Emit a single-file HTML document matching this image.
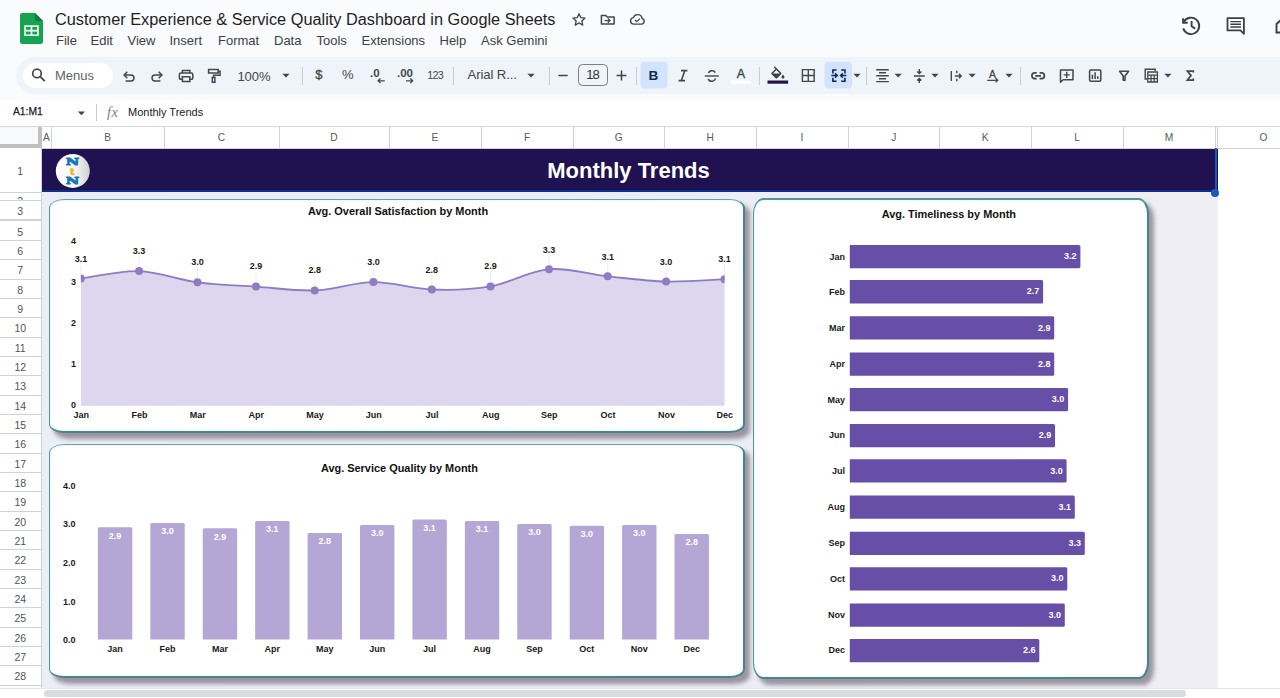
<!DOCTYPE html>
<html lang="en"><head><meta charset="utf-8"><title>Customer Experience &amp; Service Quality Dashboard</title>
<style>
*{box-sizing:border-box;margin:0;padding:0}
html,body{width:1280px;height:698px;overflow:hidden;background:#f9fbfd;font-family:"Liberation Sans",Arial,sans-serif;color:#1f1f1f}
.abs{position:absolute}
#root{position:relative;width:1280px;height:698px;overflow:hidden}
.title{left:55px;top:9.4px;font-size:15.6px;line-height:22px;color:#1f1f1f;white-space:nowrap;transform-origin:0 50%;transform:scaleX(1.046)}
.menu{top:31.5px;font-size:13px;line-height:18px;color:#3c4043;white-space:nowrap}
.tb{left:16px;top:57px;width:1290px;height:37px;border-radius:19px;background:#eff3fa}
.tbt{font-size:13.5px;color:#444746;line-height:18px;white-space:nowrap}
.sep{width:1px;height:18px;top:66.5px;background:#c9ccd1}
.fbar{left:0;top:99.6px;width:1280px;height:27px;background:#fff}
.colhdr{top:127px;height:21px;background:#fff;border-right:1px solid #cfd2d6;font-size:10.2px;color:#555a60;text-align:center;line-height:22px}
.rowhdr{left:0;width:42px;background:#fff;border-bottom:1px solid #cfd2d6;font-size:10.5px;color:#50545a;text-align:center;overflow:hidden;padding-right:1.5px}
.card{background:#fff;border:solid #4b8388;border-width:1.9px 2.5px 2.2px 1.9px;border-top-color:#6d9fa2;border-left-color:#5a9497;box-shadow:5px 5.5px 4px rgba(105,96,108,.62), inset 0 0 3px rgba(170,235,235,.6)}
.ct{font-weight:bold;font-size:10.6px;color:#111;text-align:center;white-space:nowrap;line-height:12px}
svg text{font-family:"Liberation Sans",Arial,sans-serif;font-weight:bold}
</style></head>
<body><div id="root">
<div class="abs" style="left:0;top:0;width:1280px;height:99px;background:#f9fbfd"></div>
<svg class="abs" style="left:19px;top:12px" width="25" height="33" viewBox="0 0 25 33">
<path d="M3.5 1 H16 L24 9 V29.5 a2.5 2.5 0 0 1 -2.5 2.5 H3.5 a2.5 2.5 0 0 1 -2.5 -2.5 V3.5 A2.5 2.5 0 0 1 3.5 1 Z" fill="#17a451"/>
<path d="M16 1 L24 9 H18 a2 2 0 0 1 -2 -2 Z" fill="#0c7d3b"/>
<rect x="5.2" y="13.2" width="14.6" height="10.8" fill="#e9f7ee"/>
<rect x="7" y="15" width="4.6" height="2.8" fill="#17a451"/><rect x="13.4" y="15" width="4.6" height="2.8" fill="#17a451"/>
<rect x="7" y="19.6" width="4.6" height="2.8" fill="#17a451"/><rect x="13.4" y="19.6" width="4.6" height="2.8" fill="#17a451"/>
</svg>
<div class="abs title">Customer Experience &amp; Service Quality Dashboard in Google Sheets</div>
<div class="abs menu" style="left:56px">File</div>
<div class="abs menu" style="left:90.5px">Edit</div>
<div class="abs menu" style="left:127.5px">View</div>
<div class="abs menu" style="left:169.5px">Insert</div>
<div class="abs menu" style="left:218px">Format</div>
<div class="abs menu" style="left:274px">Data</div>
<div class="abs menu" style="left:316.5px">Tools</div>
<div class="abs menu" style="left:361.5px">Extensions</div>
<div class="abs menu" style="left:439.5px">Help</div>
<div class="abs menu" style="left:481px">Ask Gemini</div>
<div class="abs tb"></div>
<div class="abs" style="left:23px;top:63px;width:90px;height:24.6px;border-radius:13px;background:#fff"></div>
<div class="abs tbt" style="left:55px;top:67px;font-size:13px;color:#5f6368">Menus</div>
<div class="abs tbt" style="left:237.4px;top:67.6px;font-size:13px">100%</div>
<div class="abs tbt" style="left:315.3px;top:66px;font-size:13px;-webkit-text-stroke:0.3px #444746">$</div>
<div class="abs tbt" style="left:342px;top:66px;font-size:13px">%</div>
<div class="abs tbt" style="left:370px;top:64px;font-size:11.5px;font-weight:bold">.0</div>
<div class="abs tbt" style="left:397px;top:64px;font-size:11.5px;font-weight:bold">.00</div>
<div class="abs tbt" style="left:427.2px;top:66.3px;font-size:10.8px;letter-spacing:-0.75px">123</div>
<div class="abs tbt" style="left:467.5px;top:66.3px;font-size:13.2px;letter-spacing:-0.12px">Arial R...</div>
<div class="abs" style="left:577.6px;top:64.2px;width:30.4px;height:21.6px;border:1px solid #7c7f82;border-radius:4.5px"></div>
<div class="abs tbt" style="left:577.6px;top:66.3px;width:30px;text-align:center;color:#303134;font-size:13px;letter-spacing:-0.8px">18</div>
<div class="abs sep" style="left:302px"></div>
<div class="abs sep" style="left:453px"></div>
<div class="abs sep" style="left:548.5px"></div>
<div class="abs sep" style="left:636px"></div>
<div class="abs sep" style="left:759px"></div>
<div class="abs sep" style="left:866px"></div>
<div class="abs sep" style="left:1020px"></div>
<div class="abs fbar"></div>
<div class="abs" style="left:13px;top:105px;font-size:10.3px;color:#202124;line-height:14px;-webkit-text-stroke:0.25px #202124">A1:M1</div>
<div class="abs" style="left:96px;top:104px;width:1px;height:17px;background:#c7c9cc"></div>
<div class="abs" style="left:107px;top:103.6px;font-size:14.5px;color:#7b8085;line-height:16px;font-style:italic;letter-spacing:0.4px;font-family:'Liberation Serif',serif">fx</div>
<div class="abs" style="left:128px;top:105px;font-size:11px;color:#202124;line-height:14px">Monthly Trends</div>
<svg class="abs" style="left:0;top:0" width="1280" height="130" viewBox="0 0 1280 130" fill="none" stroke="#444746" stroke-width="1.6" stroke-linecap="butt" stroke-linejoin="miter">
<path d="M579 13.7 l1.8 4 4.3 .4 -3.3 2.9 1 4.2 -3.8 -2.3 -3.8 2.3 1 -4.2 -3.3 -2.9 4.3 -.4 Z" stroke-width="1.3" stroke-linejoin="round"/>
<path d="M601.4 15.4 h4.4 l1.5 1.6 h6.8 v7 h-12.7 Z" stroke-width="1.5" stroke-linejoin="round"/><path d="M604.6 20.6 h5.2 M607.8 18.5 l2.2 2.1 -2.2 2.1" stroke-width="1.3"/>
<path d="M633.2 24.1 h8.4 a2.8 2.8 0 0 0 .5 -5.5 a4.5 4.5 0 0 0 -8.7 -1 a3.3 3.3 0 0 0 -.2 6.5 Z" stroke-width="1.4"/><path d="M635 20 l1.7 1.7 3.1 -3.1" stroke-width="1.3"/>
<g stroke-width="1.9" stroke="#3c4043" transform="translate(0.6,0.4)"><path d="M1183.2 21.5 a8.2 8.2 0 1 1 -.6 6.5"/><path d="M1182.5 17.8 v4.6 h4.6" /><path d="M1191 20.5 v5.4 l3.6 2.3"/></g>
<g stroke="#3c4043"><path d="M1227.5 18.2 h16.4 v15.6 l-3.4 -3.4 h-13 Z" stroke-width="1.8" stroke-linejoin="round"/><path d="M1230.4 21.6 h10.6 M1230.4 24.3 h10.6 M1230.4 27 h10.6" stroke-width="1.4"/></g>
<path d="M1281 20 l-4.5 4 v8.5 h5" stroke="#3c4043" stroke-width="1.9"/>
<circle cx="37" cy="73.4" r="4.3" stroke-width="1.7"/><path d="M40.2 76.6 l4.6 4.6" stroke-width="1.9"/>
<path d="M124.4 75 h6.6 a2.95 2.95 0 0 1 0 5.9 h-5.4" stroke-width="1.5"/><path d="M127.3 71.8 l-3.2 3.2 3.2 3.2" stroke-width="1.5"/>
<path d="M161.6 75 h-6.6 a2.95 2.95 0 0 0 0 5.9 h5.4" stroke-width="1.5"/><path d="M158.7 71.8 l3.2 3.2 -3.2 3.2" stroke-width="1.5"/>
<path d="M182.4 73 v-2.6 h7.4 v2.6 M182.4 79.2 h-1.8 a1.2 1.2 0 0 1 -1.2 -1.2 v-3.4 a1.6 1.6 0 0 1 1.6 -1.6 h10.2 a1.6 1.6 0 0 1 1.6 1.6 v3.4 a1.2 1.2 0 0 1 -1.2 1.2 h-1.8 M182.4 76.8 h7.4 v4.6 h-7.4 Z" stroke-width="1.5"/>
<path d="M208.6 69.4 h9.6 v3.6 h-9.6 Z M218.2 71.2 h1.8 v4 h-6.4 v2.4 M212.3 77.6 h2.6 v4.6 h-2.6 Z" stroke-width="1.5"/>
<path d="M282.4 73.7 h7.2 l-3.6 3.8 Z" fill="#444746" stroke="none"/>
<path d="M384.8 80.8 h-6.6 M380.5 78.5 l-2.4 2.3 2.4 2.3" stroke-width="1.3"/>
<path d="M406 80.8 h6.6 M410.3 78.5 l2.4 2.3 -2.4 2.3" stroke-width="1.3"/>
<path d="M527.4 73.7 h7.2 l-3.6 3.8 Z" fill="#444746" stroke="none"/>
<path d="M558.3 75.5 h9.4" stroke-width="1.5"/><path d="M616.6 75.5 h9.8 M621.5 70.6 v9.8" stroke-width="1.5"/>
<rect x="640.5" y="61.8" width="27" height="26.6" rx="4" fill="#d3e3fd" stroke="none"/>
<rect x="824.5" y="61.8" width="27.5" height="26.6" rx="4" fill="#d3e3fd" stroke="none"/>
<path d="M681 70.6 h6.4 M678.6 80.6 h6.4 M684.8 70.6 l-3.4 10" stroke-width="1.6"/>
<path d="M704.8 76 h14" stroke-width="1.4"/><path d="M715.2 72.6 a3.4 2.6 0 0 0 -6.6 .6 M708.4 78.8 a3.4 2.6 0 0 0 6.8 -.4" stroke-width="1.5"/>
<rect x="731" y="80.6" width="20" height="3.4" fill="#fff" stroke="none"/>
<g transform="translate(769.1,66.2) scale(0.73)" fill="#3f4245" stroke="none"><path d="M16.56 8.94 L7.62 0 6.21 1.41 l2.38 2.38 -5.15 5.15 c-.59.59-.59 1.54 0 2.12 l5.5 5.5 c.29.29.68.44 1.06.44 s.77-.15 1.06-.44 l5.5-5.5 c.59-.58.59-1.53 0-2.12 z M5.21 10 L10 5.21 14.79 10 H5.21 z M19 11.5 s-2 2.17-2 3.5 c0 1.1.9 2 2 2 s2-.9 2-2 c0-1.33-2-3.5-2-3.5 z"/></g>
<rect x="767.5" y="80.5" width="20.6" height="3.2" fill="#20124d" stroke="none"/>
<path d="M802.4 69.6 h11.8 v11.8 h-11.8 Z M808.3 69.6 v11.8 M802.4 75.5 h11.8" stroke-width="1.4"/>
<g stroke="#0b2a5e" stroke-width="1.6"><path d="M836.6 70 h-3.7 v3.4 M841.2 70 h3.7 v3.4 M844.9 77.8 v3.4 h-3.7 M836.6 81.2 h-3.7 v-3.4"/><path d="M831.4 75.6 h5.6 M835 73.4 l2.2 2.2 -2.2 2.2 M846.4 75.6 h-5.6 M842.8 73.4 l-2.2 2.2 2.2 2.2" stroke-width="1.5"/></g>
<path d="M853.4 73.7 h7.2 l-3.6 3.8 Z" fill="#444746" stroke="none"/>
<path d="M876.2 69.7 h12.6 M879 72.7 h7 M876.2 75.7 h12.6 M879 78.7 h7 M876.2 81.6 h12.6" stroke-width="1.35"/>
<path d="M894.6 73.7 h7.2 l-3.6 3.8 Z" fill="#444746" stroke="none"/>
<path d="M913.9 76 h10.9 M919.3 69 v4.4 M917.2 71.4 l2.1 2.1 2.1 -2.1 M919.3 83 v-4.4 M917.2 80.6 l2.1 -2.1 2.1 2.1" stroke-width="1.4"/>
<path d="M931.4 73.7 h7.2 l-3.6 3.8 Z" fill="#444746" stroke="none"/>
<path d="M951.3 71 v10 M954.8 76 h6.4 M959 73.8 l2.2 2.2 -2.2 2.2 M956.8 70.8 v2.4 M956.8 78.8 v2.4" stroke-width="1.4"/>
<path d="M968.5 73.7 h7.2 l-3.6 3.8 Z" fill="#444746" stroke="none"/>
<path d="M987.2 80.3 h10.4 M995.6 78.2 l2.2 2.1 -2.2 2.1" stroke-width="1.3"/>
<path d="M1005.4 73.7 h7.2 l-3.6 3.8 Z" fill="#444746" stroke="none"/>
<path d="M1036.7 72.9 h-1.9 a2.9 2.9 0 0 0 0 5.8 h1.9 M1039.6 72.9 h1.9 a2.9 2.9 0 0 1 0 5.8 h-1.9 M1035.3 75.8 h5.7" stroke-width="1.7"/>
<path d="M1060.5 70.1 h12.5 v9.7 h-9.9 l-2.6 2.4 Z" stroke-width="1.5" stroke-linejoin="round"/><path d="M1063.6 74.9 h6.2 M1066.7 71.8 v6.2" stroke-width="1.4"/>
<rect x="1089.6" y="70" width="11.2" height="11.2" rx="1.2" stroke-width="1.5"/><path d="M1092.4 79 v-4.2 M1095.1 79 v-6.8 M1097.8 79 v-2.8" stroke-width="1.5"/>
<path d="M1119.6 71.3 h9 l-3.6 4.6 v4.4 h-1.8 v-4.4 Z" stroke-width="1.6" stroke-linejoin="round"/>
<path d="M1147.4 79 h-2.2 v-9.8 h10 v2" stroke-width="1.4"/><path d="M1147.8 72 h9.6 v10 h-9.6 Z M1147.8 75.2 h9.6 M1151 75.2 v6.8 M1154.2 75.2 v6.8 M1147.8 78.6 h9.6" stroke-width="1.3"/>
<path d="M1164.3000000000002 73.7 h7.2 l-3.6 3.8 Z" fill="#444746" stroke="none"/>
<path d="M1193.3 72.6 v-1.5 h-5.9 l3.6 4.5 -3.6 4.5 h5.9 v-1.5" stroke-width="1.7"/>
<path d="M77.80000000000001 111.4 h7.2 l-3.6 3.8 Z" fill="#444746" stroke="none"/>
</svg>
<div class="abs" style="left:648.5px;top:66.5px;font-size:13.5px;font-weight:bold;color:#0b2a5e;line-height:18px">B</div>
<div class="abs" style="left:736.7px;top:64.6px;font-size:12.5px;color:#444746;line-height:18px;-webkit-text-stroke:0.35px #444746">A</div>
<div class="abs" style="left:989.1px;top:65.6px;font-size:10.4px;color:#444746;line-height:18px;-webkit-text-stroke:0.3px #444746">A</div>
<div class="abs" style="left:0;top:126px;width:1280px;height:572px;background:#fff"></div>
<div class="abs" style="left:0;top:126px;width:1280px;height:1px;background:#d5d7da"></div>
<div class="abs" style="left:42px;top:192px;width:1176px;height:496px;background:linear-gradient(90deg,#ebeef7 0%,#ecedf6 60%,#eeeef4 100%)"></div>
<div class="abs" style="left:0;top:127px;width:42px;height:21px;background:#f8f9fa;border-right:4px solid #c0c0c0;border-bottom:4px solid #c0c0c0"></div>
<div class="abs colhdr" style="left:42px;width:10px">A</div>
<div class="abs colhdr" style="left:52px;width:112.5px">B</div>
<div class="abs colhdr" style="left:164.5px;width:115.0px">C</div>
<div class="abs colhdr" style="left:279.5px;width:110.0px">D</div>
<div class="abs colhdr" style="left:389.5px;width:92.0px">E</div>
<div class="abs colhdr" style="left:481.5px;width:92.0px">F</div>
<div class="abs colhdr" style="left:573.5px;width:91.5px">G</div>
<div class="abs colhdr" style="left:665px;width:91.5px">H</div>
<div class="abs colhdr" style="left:756.5px;width:92.0px">I</div>
<div class="abs colhdr" style="left:848.5px;width:91.5px">J</div>
<div class="abs colhdr" style="left:940px;width:91.5px">K</div>
<div class="abs colhdr" style="left:1031.5px;width:92.0px">L</div>
<div class="abs colhdr" style="left:1123.5px;width:92.0px">M</div>
<div class="abs colhdr" style="left:1215.5px;width:2.5px"></div>
<div class="abs colhdr" style="left:1218px;width:92px">O</div>
<div class="abs" style="left:42px;top:148px;width:1238px;height:1px;background:#cfd2d6"></div>
<div class="abs rowhdr" style="top:148.50px;height:44.00px;line-height:44.40px">1</div>
<div class="abs rowhdr" style="top:192.50px;height:8.10px;line-height:17.60px">2</div>
<div class="abs rowhdr" style="top:200.60px;height:20.90px;line-height:21.30px;border-bottom-width:2px">3</div>
<div class="abs rowhdr" style="top:221.50px;height:19.34px;line-height:21.54px">5</div>
<div class="abs rowhdr" style="top:240.84px;height:19.34px;line-height:21.54px">6</div>
<div class="abs rowhdr" style="top:260.18px;height:19.34px;line-height:21.54px">7</div>
<div class="abs rowhdr" style="top:279.52px;height:19.34px;line-height:21.54px">8</div>
<div class="abs rowhdr" style="top:298.86px;height:19.34px;line-height:21.54px">9</div>
<div class="abs rowhdr" style="top:318.20px;height:19.34px;line-height:21.54px">10</div>
<div class="abs rowhdr" style="top:337.54px;height:19.34px;line-height:21.54px">11</div>
<div class="abs rowhdr" style="top:356.88px;height:19.34px;line-height:21.54px">12</div>
<div class="abs rowhdr" style="top:376.22px;height:19.34px;line-height:21.54px">13</div>
<div class="abs rowhdr" style="top:395.56px;height:19.34px;line-height:21.54px">14</div>
<div class="abs rowhdr" style="top:414.90px;height:19.34px;line-height:21.54px">15</div>
<div class="abs rowhdr" style="top:434.24px;height:19.34px;line-height:21.54px">16</div>
<div class="abs rowhdr" style="top:453.58px;height:19.34px;line-height:21.54px">17</div>
<div class="abs rowhdr" style="top:472.92px;height:19.34px;line-height:21.54px">18</div>
<div class="abs rowhdr" style="top:492.26px;height:19.34px;line-height:21.54px">19</div>
<div class="abs rowhdr" style="top:511.60px;height:19.34px;line-height:21.54px">20</div>
<div class="abs rowhdr" style="top:530.94px;height:19.34px;line-height:21.54px">21</div>
<div class="abs rowhdr" style="top:550.28px;height:19.34px;line-height:21.54px">22</div>
<div class="abs rowhdr" style="top:569.62px;height:19.34px;line-height:21.54px">23</div>
<div class="abs rowhdr" style="top:588.96px;height:19.34px;line-height:21.54px">24</div>
<div class="abs rowhdr" style="top:608.30px;height:19.34px;line-height:21.54px">25</div>
<div class="abs rowhdr" style="top:627.64px;height:19.34px;line-height:21.54px">26</div>
<div class="abs rowhdr" style="top:646.98px;height:19.34px;line-height:21.54px">27</div>
<div class="abs rowhdr" style="top:666.32px;height:19.34px;line-height:21.54px">28</div>
<div class="abs" style="left:41px;top:148px;width:1px;height:540px;background:#cfd2d6"></div>
<div class="abs" style="left:42px;top:148.5px;width:1176px;height:43.6px;background:#201250;border-bottom:2.2px solid #0a2f8c"></div>
<div class="abs" style="left:1214.5px;top:148px;width:2px;height:45px;background:#1a56c4"></div>
<div class="abs" style="left:1211px;top:188.5px;width:8px;height:8px;border-radius:4px;background:#1a56c4"></div>
<div class="abs" style="left:42px;top:159.3px;width:1173px;text-align:center;font-weight:bold;font-size:22px;line-height:24px;color:#fff">Monthly Trends</div>
<svg class="abs" style="left:54.6px;top:152.8px" width="36" height="36" viewBox="0 0 36 36">
<defs><linearGradient id="lg" x1="0" x2="1"><stop offset="0" stop-color="#fff"/><stop offset="0.6" stop-color="#f4f4f4"/><stop offset="1" stop-color="#cfcfcf"/></linearGradient></defs>
<circle cx="17.8" cy="17.9" r="17" fill="url(#lg)"/>
<text x="0" y="0" text-anchor="middle" font-size="9.2" fill="#1579b8" stroke="#1579b8" stroke-width="0.9" stroke-linejoin="round" style="font-family:'DejaVu Serif',serif;font-weight:bold" transform="translate(17.4,11.7) scale(1.6,1)">N</text>
<text x="0" y="0" text-anchor="middle" font-size="9.2" fill="#1579b8" stroke="#1579b8" stroke-width="0.9" stroke-linejoin="round" style="font-family:'DejaVu Serif',serif;font-weight:bold" transform="translate(17.4,30.7) scale(1.6,1)">N</text>
<text x="17.2" y="21.9" text-anchor="middle" font-size="9.6" fill="#f4b223" stroke="#f4b223" stroke-width="0.7" style="font-family:'DejaVu Serif',serif;font-weight:bold">t</text>
</svg>
<div class="abs" style="left:0;top:687.5px;width:1280px;height:10.5px;background:#fff;border-top:1px solid #e6e7ea"></div>
<div class="abs" style="left:44px;top:690px;width:1141.5px;height:6.6px;border-radius:3.3px;background:#dadce0"></div>
<div class="abs card" style="left:49px;top:199.2px;width:696.2px;height:233.9px;border-radius:15px / 9px"></div>
<div class="abs card" style="left:49px;top:443.9px;width:696.4px;height:234.1px;border-radius:15px / 9px"></div>
<div class="abs card" style="left:752.5px;top:197.9px;width:396.9px;height:481.3px;border-radius:10.5px / 16px;border-top-color:#5a9391;border-top-width:2.1px"></div>
<svg class="abs" style="left:0;top:0" width="1280" height="698" viewBox="0 0 1280 698">
<path d="M80.9 278.6 C90.6 277.35 119.67 270.48 139.1 271.1 C158.53 271.72 178.02 279.72 197.5 282.3 C216.98 284.88 236.47 285.25 256 286.6 C275.53 287.95 295.13 291.15 314.7 290.4 C334.27 289.65 353.88 282.25 373.4 282.1 C392.92 281.95 412.28 288.78 431.8 289.5 C451.32 290.22 470.97 289.78 490.5 286.4 C510.03 283.02 529.47 270.88 549 269.2 C568.53 267.52 588.18 274.25 607.7 276.3 C627.22 278.35 646.63 281.02 666.1 281.5 C685.57 281.98 714.77 279.58 724.5 279.2 L724.5 405.8 L80.9 405.8 Z" fill="#dcd6ee"/>
<line x1="80.9" y1="264.5" x2="80.9" y2="278.6" stroke="#e9e6f1" stroke-width="0.8"/>
<line x1="139.1" y1="256.5" x2="139.1" y2="271.1" stroke="#e9e6f1" stroke-width="0.8"/>
<line x1="197.5" y1="267.7" x2="197.5" y2="282.3" stroke="#e9e6f1" stroke-width="0.8"/>
<line x1="256" y1="271.7" x2="256" y2="286.6" stroke="#e9e6f1" stroke-width="0.8"/>
<line x1="314.7" y1="275.7" x2="314.7" y2="290.4" stroke="#e9e6f1" stroke-width="0.8"/>
<line x1="373.4" y1="266.8" x2="373.4" y2="282.1" stroke="#e9e6f1" stroke-width="0.8"/>
<line x1="431.8" y1="274.8" x2="431.8" y2="289.5" stroke="#e9e6f1" stroke-width="0.8"/>
<line x1="490.5" y1="271.7" x2="490.5" y2="286.4" stroke="#e9e6f1" stroke-width="0.8"/>
<line x1="549" y1="254.8" x2="549" y2="269.2" stroke="#e9e6f1" stroke-width="0.8"/>
<line x1="607.7" y1="261.9" x2="607.7" y2="276.3" stroke="#e9e6f1" stroke-width="0.8"/>
<line x1="666.1" y1="266.8" x2="666.1" y2="281.5" stroke="#e9e6f1" stroke-width="0.8"/>
<line x1="724.5" y1="264.5" x2="724.5" y2="279.2" stroke="#e9e6f1" stroke-width="0.8"/>
<path d="M80.9 278.6 C90.6 277.35 119.67 270.48 139.1 271.1 C158.53 271.72 178.02 279.72 197.5 282.3 C216.98 284.88 236.47 285.25 256 286.6 C275.53 287.95 295.13 291.15 314.7 290.4 C334.27 289.65 353.88 282.25 373.4 282.1 C392.92 281.95 412.28 288.78 431.8 289.5 C451.32 290.22 470.97 289.78 490.5 286.4 C510.03 283.02 529.47 270.88 549 269.2 C568.53 267.52 588.18 274.25 607.7 276.3 C627.22 278.35 646.63 281.02 666.1 281.5 C685.57 281.98 714.77 279.58 724.5 279.2" fill="none" stroke="#8e7cc3" stroke-width="1.8"/>
<clipPath id="pc"><rect x="80.9" y="230" width="643.7" height="180"/></clipPath><g clip-path="url(#pc)">
<circle cx="80.9" cy="278.6" r="4" fill="#8e7cc3"/>
<circle cx="139.1" cy="271.1" r="4" fill="#8e7cc3"/>
<circle cx="197.5" cy="282.3" r="4" fill="#8e7cc3"/>
<circle cx="256" cy="286.6" r="4" fill="#8e7cc3"/>
<circle cx="314.7" cy="290.4" r="4" fill="#8e7cc3"/>
<circle cx="373.4" cy="282.1" r="4" fill="#8e7cc3"/>
<circle cx="431.8" cy="289.5" r="4" fill="#8e7cc3"/>
<circle cx="490.5" cy="286.4" r="4" fill="#8e7cc3"/>
<circle cx="549" cy="269.2" r="4" fill="#8e7cc3"/>
<circle cx="607.7" cy="276.3" r="4" fill="#8e7cc3"/>
<circle cx="666.1" cy="281.5" r="4" fill="#8e7cc3"/>
<circle cx="724.5" cy="279.2" r="4" fill="#8e7cc3"/>
</g>
<text x="80.9" y="262.2" text-anchor="middle" font-size="9" fill="#1a1a1a">3.1</text>
<text x="139.1" y="254.2" text-anchor="middle" font-size="9" fill="#1a1a1a">3.3</text>
<text x="197.5" y="265.4" text-anchor="middle" font-size="9" fill="#1a1a1a">3.0</text>
<text x="256" y="269.4" text-anchor="middle" font-size="9" fill="#1a1a1a">2.9</text>
<text x="314.7" y="273.4" text-anchor="middle" font-size="9" fill="#1a1a1a">2.8</text>
<text x="373.4" y="264.5" text-anchor="middle" font-size="9" fill="#1a1a1a">3.0</text>
<text x="431.8" y="272.5" text-anchor="middle" font-size="9" fill="#1a1a1a">2.8</text>
<text x="490.5" y="269.4" text-anchor="middle" font-size="9" fill="#1a1a1a">2.9</text>
<text x="549" y="252.5" text-anchor="middle" font-size="9" fill="#1a1a1a">3.3</text>
<text x="607.7" y="259.6" text-anchor="middle" font-size="9" fill="#1a1a1a">3.1</text>
<text x="666.1" y="264.5" text-anchor="middle" font-size="9" fill="#1a1a1a">3.0</text>
<text x="724.5" y="262.2" text-anchor="middle" font-size="9" fill="#1a1a1a">3.1</text>
<text x="81.2" y="418" text-anchor="middle" font-size="9" fill="#1a1a1a">Jan</text>
<text x="139.4" y="418" text-anchor="middle" font-size="9" fill="#1a1a1a">Feb</text>
<text x="197.8" y="418" text-anchor="middle" font-size="9" fill="#1a1a1a">Mar</text>
<text x="256.3" y="418" text-anchor="middle" font-size="9" fill="#1a1a1a">Apr</text>
<text x="315" y="418" text-anchor="middle" font-size="9" fill="#1a1a1a">May</text>
<text x="373.7" y="418" text-anchor="middle" font-size="9" fill="#1a1a1a">Jun</text>
<text x="432.1" y="418" text-anchor="middle" font-size="9" fill="#1a1a1a">Jul</text>
<text x="490.8" y="418" text-anchor="middle" font-size="9" fill="#1a1a1a">Aug</text>
<text x="549.3" y="418" text-anchor="middle" font-size="9" fill="#1a1a1a">Sep</text>
<text x="608" y="418" text-anchor="middle" font-size="9" fill="#1a1a1a">Oct</text>
<text x="666.4" y="418" text-anchor="middle" font-size="9" fill="#1a1a1a">Nov</text>
<text x="724.8" y="418" text-anchor="middle" font-size="9" fill="#1a1a1a">Dec</text>
<text x="73.5" y="244.2" text-anchor="middle" font-size="9" fill="#1a1a1a">4</text>
<text x="73.5" y="284.9" text-anchor="middle" font-size="9" fill="#1a1a1a">3</text>
<text x="73.5" y="326.1" text-anchor="middle" font-size="9" fill="#1a1a1a">2</text>
<text x="73.5" y="367.1" text-anchor="middle" font-size="9" fill="#1a1a1a">1</text>
<text x="73.5" y="407.7" text-anchor="middle" font-size="9" fill="#1a1a1a">0</text>
<text x="398.1" y="214.8" text-anchor="middle" font-size="10.95" fill="#111">Avg. Overall Satisfaction by Month</text>
<path d="M97.9 639.6 V528.8 q0 -1.5 1.5 -1.5 H130.8 q1.5 0 1.5 1.5 V639.6 Z" fill="#b4a7d6"/>
<text x="115.1" y="538.6" text-anchor="middle" font-size="9" fill="#fff">2.9</text>
<text x="115.1" y="651.7" text-anchor="middle" font-size="9" fill="#1a1a1a">Jan</text>
<path d="M150.32 639.6 V524.5 q0 -1.5 1.5 -1.5 H183.22 q1.5 0 1.5 1.5 V639.6 Z" fill="#b4a7d6"/>
<text x="167.52" y="534.3" text-anchor="middle" font-size="9" fill="#fff">3.0</text>
<text x="167.52" y="651.7" text-anchor="middle" font-size="9" fill="#1a1a1a">Feb</text>
<path d="M202.74 639.6 V529.7 q0 -1.5 1.5 -1.5 H235.64 q1.5 0 1.5 1.5 V639.6 Z" fill="#b4a7d6"/>
<text x="219.94" y="539.5" text-anchor="middle" font-size="9" fill="#fff">2.9</text>
<text x="219.94" y="651.7" text-anchor="middle" font-size="9" fill="#1a1a1a">Mar</text>
<path d="M255.16 639.6 V522.5 q0 -1.5 1.5 -1.5 H288.06 q1.5 0 1.5 1.5 V639.6 Z" fill="#b4a7d6"/>
<text x="272.36" y="532.3" text-anchor="middle" font-size="9" fill="#fff">3.1</text>
<text x="272.36" y="651.7" text-anchor="middle" font-size="9" fill="#1a1a1a">Apr</text>
<path d="M307.58 639.6 V534.6 q0 -1.5 1.5 -1.5 H340.48 q1.5 0 1.5 1.5 V639.6 Z" fill="#b4a7d6"/>
<text x="324.78" y="544.4" text-anchor="middle" font-size="9" fill="#fff">2.8</text>
<text x="324.78" y="651.7" text-anchor="middle" font-size="9" fill="#1a1a1a">May</text>
<path d="M360 639.6 V526.4 q0 -1.5 1.5 -1.5 H392.9 q1.5 0 1.5 1.5 V639.6 Z" fill="#b4a7d6"/>
<text x="377.2" y="536.2" text-anchor="middle" font-size="9" fill="#fff">3.0</text>
<text x="377.2" y="651.7" text-anchor="middle" font-size="9" fill="#1a1a1a">Jun</text>
<path d="M412.42 639.6 V520.9 q0 -1.5 1.5 -1.5 H445.32 q1.5 0 1.5 1.5 V639.6 Z" fill="#b4a7d6"/>
<text x="429.62" y="530.7" text-anchor="middle" font-size="9" fill="#fff">3.1</text>
<text x="429.62" y="651.7" text-anchor="middle" font-size="9" fill="#1a1a1a">Jul</text>
<path d="M464.84 639.6 V522.6 q0 -1.5 1.5 -1.5 H497.74 q1.5 0 1.5 1.5 V639.6 Z" fill="#b4a7d6"/>
<text x="482.04" y="532.4" text-anchor="middle" font-size="9" fill="#fff">3.1</text>
<text x="482.04" y="651.7" text-anchor="middle" font-size="9" fill="#1a1a1a">Aug</text>
<path d="M517.26 639.6 V525.6 q0 -1.5 1.5 -1.5 H550.16 q1.5 0 1.5 1.5 V639.6 Z" fill="#b4a7d6"/>
<text x="534.46" y="535.4" text-anchor="middle" font-size="9" fill="#fff">3.0</text>
<text x="534.46" y="651.7" text-anchor="middle" font-size="9" fill="#1a1a1a">Sep</text>
<path d="M569.68 639.6 V527.2 q0 -1.5 1.5 -1.5 H602.58 q1.5 0 1.5 1.5 V639.6 Z" fill="#b4a7d6"/>
<text x="586.88" y="537" text-anchor="middle" font-size="9" fill="#fff">3.0</text>
<text x="586.88" y="651.7" text-anchor="middle" font-size="9" fill="#1a1a1a">Oct</text>
<path d="M622.1 639.6 V526.4 q0 -1.5 1.5 -1.5 H655 q1.5 0 1.5 1.5 V639.6 Z" fill="#b4a7d6"/>
<text x="639.3" y="536.2" text-anchor="middle" font-size="9" fill="#fff">3.0</text>
<text x="639.3" y="651.7" text-anchor="middle" font-size="9" fill="#1a1a1a">Nov</text>
<path d="M674.52 639.6 V535.4 q0 -1.5 1.5 -1.5 H707.42 q1.5 0 1.5 1.5 V639.6 Z" fill="#b4a7d6"/>
<text x="691.72" y="545.2" text-anchor="middle" font-size="9" fill="#fff">2.8</text>
<text x="691.72" y="651.7" text-anchor="middle" font-size="9" fill="#1a1a1a">Dec</text>
<text x="69.2" y="488.7" text-anchor="middle" font-size="9" fill="#1a1a1a">4.0</text>
<text x="69.2" y="527.3" text-anchor="middle" font-size="9" fill="#1a1a1a">3.0</text>
<text x="69.2" y="566.2" text-anchor="middle" font-size="9" fill="#1a1a1a">2.0</text>
<text x="69.2" y="604.7" text-anchor="middle" font-size="9" fill="#1a1a1a">1.0</text>
<text x="69.2" y="643.3" text-anchor="middle" font-size="9" fill="#1a1a1a">0.0</text>
<text x="399.4" y="471.7" text-anchor="middle" font-size="10.95" fill="#111">Avg. Service Quality by Month</text>
<path d="M849.8 245 H1078.9 q1.5 0 1.5 1.5 V266.8 q0 1.5 -1.5 1.5 H849.8 Z" fill="#674ea7"/>
<text x="1076.6" y="259.2" text-anchor="end" font-size="9" fill="#fff">3.2</text>
<text x="845" y="259.5" text-anchor="end" font-size="9" fill="#1a1a1a">Jan</text>
<path d="M849.8 280.1 H1041.6 q1.5 0 1.5 1.5 V301.9 q0 1.5 -1.5 1.5 H849.8 Z" fill="#674ea7"/>
<text x="1039.3" y="294.3" text-anchor="end" font-size="9" fill="#fff">2.7</text>
<text x="845" y="294.6" text-anchor="end" font-size="9" fill="#1a1a1a">Feb</text>
<path d="M849.8 316.3 H1052.7 q1.5 0 1.5 1.5 V338.1 q0 1.5 -1.5 1.5 H849.8 Z" fill="#674ea7"/>
<text x="1050.4" y="330.5" text-anchor="end" font-size="9" fill="#fff">2.9</text>
<text x="845" y="330.8" text-anchor="end" font-size="9" fill="#1a1a1a">Mar</text>
<path d="M849.8 352.4 H1052.7 q1.5 0 1.5 1.5 V374.2 q0 1.5 -1.5 1.5 H849.8 Z" fill="#674ea7"/>
<text x="1050.4" y="366.6" text-anchor="end" font-size="9" fill="#fff">2.8</text>
<text x="845" y="366.9" text-anchor="end" font-size="9" fill="#1a1a1a">Apr</text>
<path d="M849.8 388 H1066.6 q1.5 0 1.5 1.5 V409.8 q0 1.5 -1.5 1.5 H849.8 Z" fill="#674ea7"/>
<text x="1064.3" y="402.2" text-anchor="end" font-size="9" fill="#fff">3.0</text>
<text x="845" y="402.5" text-anchor="end" font-size="9" fill="#1a1a1a">May</text>
<path d="M849.8 423.9 H1053.5 q1.5 0 1.5 1.5 V445.7 q0 1.5 -1.5 1.5 H849.8 Z" fill="#674ea7"/>
<text x="1051.2" y="438.1" text-anchor="end" font-size="9" fill="#fff">2.9</text>
<text x="845" y="438.4" text-anchor="end" font-size="9" fill="#1a1a1a">Jun</text>
<path d="M849.8 459.3 H1065.1 q1.5 0 1.5 1.5 V481.1 q0 1.5 -1.5 1.5 H849.8 Z" fill="#674ea7"/>
<text x="1062.8" y="473.5" text-anchor="end" font-size="9" fill="#fff">3.0</text>
<text x="845" y="473.8" text-anchor="end" font-size="9" fill="#1a1a1a">Jul</text>
<path d="M849.8 495.5 H1073.3 q1.5 0 1.5 1.5 V517.3 q0 1.5 -1.5 1.5 H849.8 Z" fill="#674ea7"/>
<text x="1071" y="509.7" text-anchor="end" font-size="9" fill="#fff">3.1</text>
<text x="845" y="510" text-anchor="end" font-size="9" fill="#1a1a1a">Aug</text>
<path d="M849.8 531.7 H1083.3 q1.5 0 1.5 1.5 V553.5 q0 1.5 -1.5 1.5 H849.8 Z" fill="#674ea7"/>
<text x="1081" y="545.9" text-anchor="end" font-size="9" fill="#fff">3.3</text>
<text x="845" y="546.2" text-anchor="end" font-size="9" fill="#1a1a1a">Sep</text>
<path d="M849.8 567.2 H1065.8 q1.5 0 1.5 1.5 V589 q0 1.5 -1.5 1.5 H849.8 Z" fill="#674ea7"/>
<text x="1063.5" y="581.4" text-anchor="end" font-size="9" fill="#fff">3.0</text>
<text x="845" y="581.7" text-anchor="end" font-size="9" fill="#1a1a1a">Oct</text>
<path d="M849.8 603.4 H1063.3 q1.5 0 1.5 1.5 V625.2 q0 1.5 -1.5 1.5 H849.8 Z" fill="#674ea7"/>
<text x="1061" y="617.6" text-anchor="end" font-size="9" fill="#fff">3.0</text>
<text x="845" y="617.9" text-anchor="end" font-size="9" fill="#1a1a1a">Nov</text>
<path d="M849.8 638.9 H1037.8 q1.5 0 1.5 1.5 V660.7 q0 1.5 -1.5 1.5 H849.8 Z" fill="#674ea7"/>
<text x="1035.5" y="653.1" text-anchor="end" font-size="9" fill="#fff">2.6</text>
<text x="845" y="653.4" text-anchor="end" font-size="9" fill="#1a1a1a">Dec</text>
<text x="948.8" y="217.8" text-anchor="middle" font-size="10.95" fill="#111">Avg. Timeliness by Month</text>
</svg>
</div></body></html>
